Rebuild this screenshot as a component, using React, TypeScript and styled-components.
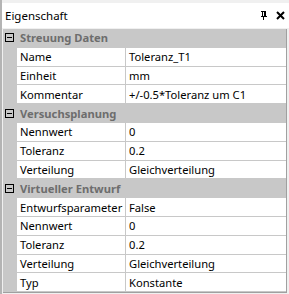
import React from "react";
import styled, { createGlobalStyle } from "styled-components";

const Global = createGlobalStyle`
  html, body { margin: 0; padding: 0; background: #f0f0f0; }
  body { font-family: "Noto Sans", "Open Sans", sans-serif; font-size: 11.2px; color: #000; }
`;

const Panel = styled.div`
  width: 289px;
  height: 294px;
  box-sizing: border-box;
  display: flex;
  flex-direction: column;
  background: #f0f0f0;
  border-left: 2px solid #b4b4b4;
  padding-top: 3px;
  overflow: hidden;
`;

const TitleBar = styled.div`
  flex: none;
  height: 25px;
  background: #fff;
  display: flex;
  align-items: center;
  justify-content: space-between;
  padding: 0 4px 0 3px;
`;

const Title = styled.span`
  font-size: 11.5px;
  line-height: 16px;
`;

const TitleIcons = styled.div`
  display: flex;
  align-items: center;
  gap: 9px;
`;

const Grid = styled.div`
  flex: none;
  margin: 1px 2px 0 1px;
  background: #c8c8c8;
  border-right: 1px solid #a0a0a0;
  border-bottom: 1px solid #a0a0a0;
  display: grid;
  grid-auto-rows: 17.8px;
  row-gap: 1px;
  padding-bottom: 1px;
`;

const GroupHeader = styled.div`
  display: flex;
  align-items: center;
  gap: 6px;
  padding-left: 2px;
  font-weight: bold;
  color: #6d6d6d;
`;

const Box = styled.span`
  width: 9px;
  height: 9px;
  box-sizing: border-box;
  border: 1px solid #000;
  position: relative;
  flex: none;
  &::after {
    content: "";
    position: absolute;
    left: 1px;
    right: 1px;
    top: 3px;
    height: 1px;
    background: #000;
  }
`;

const Row = styled.div`
  display: grid;
  grid-template-columns: 13px 108px 1fr;
  column-gap: 1px;
`;

const Cell = styled.div<{ $pad: number }>`
  background: #fff;
  display: flex;
  align-items: center;
  padding-left: ${(p) => p.$pad}px;
  white-space: nowrap;
  overflow: hidden;
`;

const Margin = styled.div``;

type Group = { name: string; rows: [string, string][] };

const groups: Group[] = [
  {
    name: "Streuung Daten",
    rows: [
      ["Name", "Toleranz_T1"],
      ["Einheit", "mm"],
      ["Kommentar", "+/-0.5*Toleranz um C1"],
    ],
  },
  {
    name: "Versuchsplanung",
    rows: [
      ["Nennwert", "0"],
      ["Toleranz", "0.2"],
      ["Verteilung", "Gleichverteilung"],
    ],
  },
  {
    name: "Virtueller Entwurf",
    rows: [
      ["Entwurfsparameter", "False"],
      ["Nennwert", "0"],
      ["Toleranz", "0.2"],
      ["Verteilung", "Gleichverteilung"],
      ["Typ", "Konstante"],
    ],
  },
];

const Pin = () => (
  <svg width="7" height="10" viewBox="0 0 7 10" shapeRendering="crispEdges">
    <rect x="1" y="0" width="5" height="1" fill="#000" />
    <rect x="2" y="1" width="1" height="4" fill="#000" />
    <rect x="4" y="1" width="2" height="4" fill="#000" />
    <rect x="1" y="5" width="6" height="1" fill="#000" />
    <rect x="3" y="6" width="1" height="3" fill="#000" />
  </svg>
);

const Close = () => (
  <svg width="9" height="9" viewBox="0 0 9 9">
    <path d="M1 1 L8 8 M8 1 L1 8" stroke="#000" strokeWidth="2" />
  </svg>
);

export default function App() {
  return (
    <>
      <Global />
      <Panel>
        <TitleBar>
          <Title>Eigenschaft</Title>
          <TitleIcons>
            <Pin />
            <Close />
          </TitleIcons>
        </TitleBar>
        <Grid>
          {groups.map((g) => (
            <React.Fragment key={g.name}>
              <GroupHeader>
                <Box />
                {g.name}
              </GroupHeader>
              {g.rows.map(([k, v]) => (
                <Row key={g.name + k}>
                  <Margin />
                  <Cell $pad={3}>{k}</Cell>
                  <Cell $pad={3}>{v}</Cell>
                </Row>
              ))}
            </React.Fragment>
          ))}
        </Grid>
      </Panel>
    </>
  );
}
